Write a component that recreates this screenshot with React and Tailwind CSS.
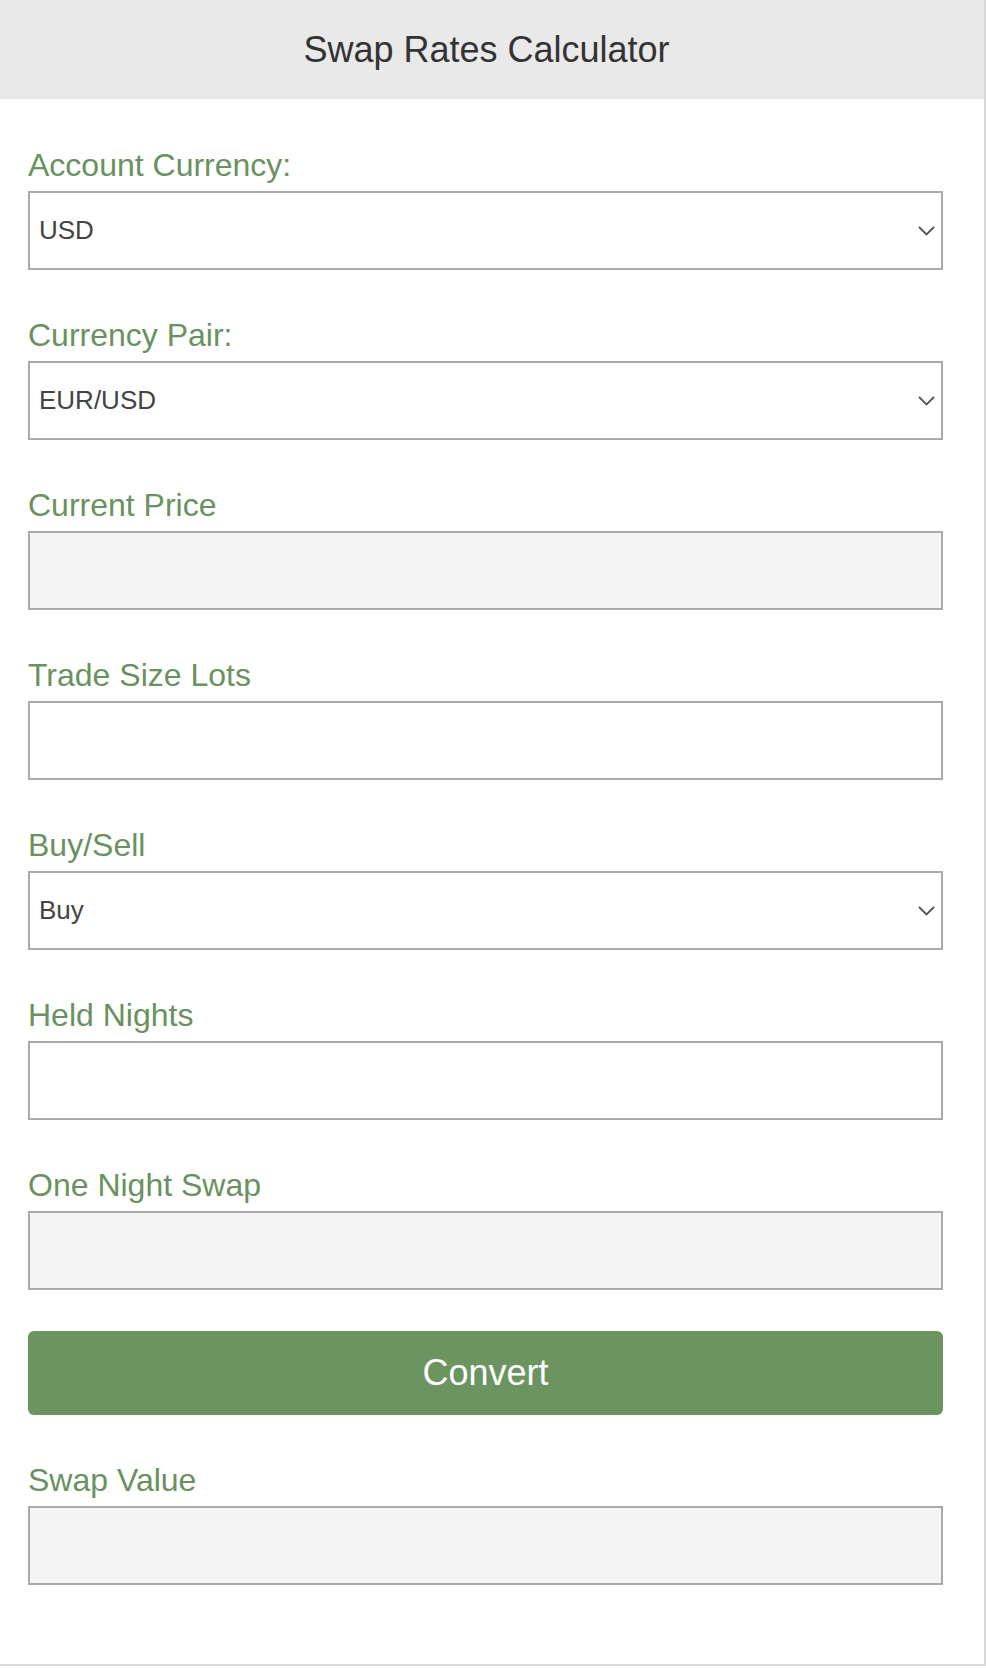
import { useState } from 'react';

const labelCls = 'block text-[32px] leading-[34px] text-[#6a9160] mb-[9px]';
const boxCls = 'w-full h-[79px] border-2 border-[#aaaaaa] px-[9px] text-[26px] text-[#444] outline-none';

function Chevron() {
  return (
    <svg className="absolute right-[8px] top-1/2 -translate-y-1/2 pointer-events-none" width="17" height="10" viewBox="0 0 17 10" fill="none">
      <polyline points="1,1 8.5,8.5 16,1" stroke="#555" strokeWidth="1.8" />
    </svg>
  );
}

function SelectField({ label, value, options, onChange }) {
  return (
    <div>
      <label className={labelCls}>{label}</label>
      <div className="relative">
        <select value={value} onChange={(e) => onChange(e.target.value)} className={`${boxCls} appearance-none bg-white`}>
          {options.map((o) => <option key={o}>{o}</option>)}
        </select>
        <Chevron />
      </div>
    </div>
  );
}

function InputField({ label, value, onChange, readOnly }) {
  return (
    <div>
      <label className={labelCls}>{label}</label>
      <input
        value={value}
        readOnly={readOnly}
        onChange={(e) => onChange?.(e.target.value)}
        className={`${boxCls} ${readOnly ? 'bg-[#f5f5f5]' : 'bg-white'}`}
      />
    </div>
  );
}

export default function App() {
  const [account, setAccount] = useState('USD');
  const [pair, setPair] = useState('EUR/USD');
  const [lots, setLots] = useState('');
  const [side, setSide] = useState('Buy');
  const [nights, setNights] = useState('');

  return (
    <div className="w-[986px] h-[1666px] bg-white border-r-2 border-b-2 border-[#d9d9d9] font-['Liberation_Sans',Arial,sans-serif]">
      {/* Header */}
      <div className="h-[99px] bg-[#e9e9e9] flex items-center justify-center pr-[11px]">
        <h1 className="text-[36px] text-[#333]">Swap Rates Calculator</h1>
      </div>

      {/* Form */}
      <div className="pl-[28px] pr-[41px] pt-[49px] flex flex-col gap-[48px]">
        <SelectField label="Account Currency:" value={account} onChange={setAccount} options={['USD', 'EUR', 'GBP', 'JPY']} />
        <SelectField label="Currency Pair:" value={pair} onChange={setPair} options={['EUR/USD', 'GBP/USD', 'USD/JPY']} />
        <InputField label="Current Price" value="" readOnly />
        <InputField label="Trade Size Lots" value={lots} onChange={setLots} />
        <SelectField label="Buy/Sell" value={side} onChange={setSide} options={['Buy', 'Sell']} />
        <InputField label="Held Nights" value={nights} onChange={setNights} />
        <InputField label="One Night Swap" value="" readOnly />
      </div>

      <div className="pl-[28px] pr-[41px] mt-[41px]">
        <button className="w-full h-[84px] rounded-[6px] bg-[#6b9461] text-white text-[36px]">Convert</button>
      </div>

      <div className="pl-[28px] pr-[41px] mt-[48px]">
        <InputField label="Swap Value" value="" readOnly />
      </div>
    </div>
  );
}
